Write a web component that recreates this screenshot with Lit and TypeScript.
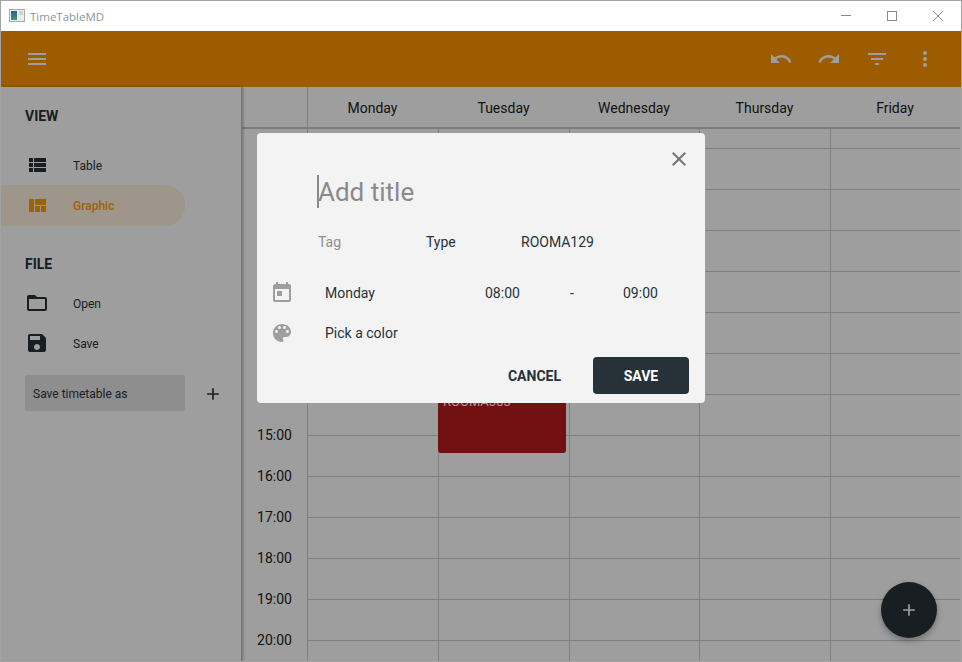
import { LitElement, html, css } from 'lit';
import { customElement } from 'lit/decorators.js';

const ICONS: Record<string, string> = {
  menu: 'M3 18h18v-2H3v2zm0-5h18v-2H3v2zm0-7v2h18V6H3z',
  undo: 'M12.5 8c-2.65 0-5.05.99-6.9 2.6L2 7v9h9l-3.62-3.62c1.39-1.16 3.16-1.88 5.12-1.88 3.54 0 6.55 2.31 7.6 5.5l2.37-.78C21.08 11.03 17.15 8 12.5 8z',
  redo: 'M18.4 10.6C16.55 8.99 14.15 8 11.5 8c-4.65 0-8.58 3.03-9.96 7.22L3.9 16c1.05-3.19 4.05-5.5 7.6-5.5 1.95 0 3.73.72 5.12 1.88L13 16h9V7l-3.6 3.6z',
  filter: 'M10 18h4v-2h-4v2zM3 6v2h18V6H3zm3 7h12v-2H6v2z',
  more: 'M12 8c1.1 0 2-.9 2-2s-.9-2-2-2-2 .9-2 2 .9 2 2 2zm0 2c-1.1 0-2 .9-2 2s.9 2 2 2 2-.9 2-2-.9-2-2-2zm0 6c-1.1 0-2 .9-2 2s.9 2 2 2 2-.9 2-2-.9-2-2-2z',
  table: 'M4 14h4v-4H4v4zm0 5h4v-4H4v4zM4 9h4V5H4v4zm5 5h12v-4H9v4zm0 5h12v-4H9v4zM9 5v4h12V5H9z',
  graphic: 'M10 18h5v-6h-5v6zm-6 0h5V5H4v13zm12 0h5v-6h-5v6zM10 5v6h11V5H10z',
  folder: 'M20 6h-8l-2-2H4c-1.1 0-1.99.9-1.99 2L2 18c0 1.1.9 2 2 2h16c1.1 0 2-.9 2-2V8c0-1.1-.9-2-2-2zm0 12H4V8h16v10z',
  save: 'M17 3H5c-1.11 0-2 .9-2 2v14c0 1.1.89 2 2 2h14c1.1 0 2-.9 2-2V7l-4-4zm-5 16c-1.66 0-3-1.34-3-3s1.34-3 3-3 3 1.34 3 3-1.34 3-3 3zm3-10H5V5h10v4z',
  add: 'M19 13h-6v6h-2v-6H5v-2h6V5h2v6h6v2z',
  close: 'M19 6.41L17.59 5 12 10.59 6.41 5 5 6.41 10.59 12 5 17.59 6.41 19 12 13.41 17.59 19 19 17.59 13.41 12z',
  today: 'M19 3h-1V1h-2v2H8V1H6v2H5c-1.11 0-1.99.9-1.99 2L3 19c0 1.1.89 2 2 2h14c1.1 0 2-.9 2-2V5c0-1.1-.9-2-2-2zm0 16H5V8h14v11zM7 10h5v5H7z',
  palette: 'M12 3c-4.97 0-9 4.03-9 9s4.03 9 9 9c.83 0 1.5-.67 1.5-1.5 0-.39-.15-.74-.39-1.01-.23-.26-.38-.61-.38-.99 0-.83.67-1.5 1.5-1.5H16c2.76 0 5-2.24 5-5 0-4.42-4.03-8-9-8zm-5.5 9c-.83 0-1.5-.67-1.5-1.5S5.67 9 6.5 9 8 9.67 8 10.5 7.33 12 6.5 12zm3-4C8.67 8 8 7.33 8 6.5S8.67 5 9.5 5s1.5.67 1.5 1.5S10.33 8 9.5 8zm5 0c-.83 0-1.5-.67-1.5-1.5S13.67 5 14.5 5s1.5.67 1.5 1.5S15.33 8 14.5 8zm3 4c-.83 0-1.5-.67-1.5-1.5S16.67 9 17.5 9s1.5.67 1.5 1.5-.67 1.5-1.5 1.5z',
};

const DAYS = ['Monday', 'Tuesday', 'Wednesday', 'Thursday', 'Friday'];
const HOURS = ['08:00', '09:00', '10:00', '11:00', '12:00', '13:00', '14:00', '15:00', '16:00', '17:00', '18:00', '19:00', '20:00'];

const icon = (name: string) => html`<svg class="icon" viewBox="0 0 24 24"><path d=${ICONS[name]}></path></svg>`;

@customElement('app-root')
export class AppRoot extends LitElement {
  static styles = css`
    :host {
      display: block;
      width: 962px;
      height: 662px;
      font-family: Roboto, 'Liberation Sans', sans-serif;
      color: #263238;
    }

    .window {
      box-sizing: border-box;
      width: 100%;
      height: 100%;
      display: flex;
      flex-direction: column;
      border: 1px solid #a3a3a3;
      background: #fff;
      overflow: hidden;
    }

    .icon {
      width: 24px;
      height: 24px;
      flex: none;
      fill: currentColor;
      display: block;
    }

    /* title bar */
    .titlebar {
      height: 30px;
      flex: none;
      display: flex;
      align-items: center;
      padding-left: 8px;
      gap: 5px;
      font-family: 'Open Sans', sans-serif;
      font-size: 11.5px;
      color: #8f939a;
    }

    .logo {
      width: 16px;
      height: 16px;
      flex: none;
    }

    .controls {
      margin-left: auto;
      display: flex;
    }

    .controls svg {
      width: 46px;
      height: 30px;
      display: block;
      fill: none;
      stroke: #8a8a8a;
      stroke-width: 1;
    }

    /* everything below the title bar sits under the scrim */
    .main {
      flex: 1;
      min-height: 0;
      position: relative;
      display: flex;
      flex-direction: column;
    }

    .toolbar {
      height: 56px;
      flex: none;
      display: flex;
      align-items: center;
      gap: 24px;
      padding: 0 24px;
      background: #ff9500;
      color: #fff;
    }

    .spacer {
      flex: 1;
    }

    .content {
      flex: 1;
      min-height: 0;
      display: flex;
      position: relative;
    }

    /* sidebar */
    .sidebar {
      width: 240px;
      flex: none;
      border-right: 1px solid #bdbdbd;
      box-shadow: 1px 0 3px rgba(0, 0, 0, 0.3);
      padding-top: 19px;
      background: #fff;
      position: relative;
    }

    .heading {
      height: 20px;
      line-height: 20px;
      padding-left: 24px;
      font-size: 14px;
      font-weight: 700;
    }

    .list {
      margin-top: 19px;
    }

    .list.file {
      margin-top: 9px;
    }

    .heading.file {
      margin-top: 28px;
    }

    .item {
      width: 160px;
      height: 40px;
      display: flex;
      align-items: center;
      gap: 24px;
      padding-left: 24px;
      border-radius: 0 20px 20px 0;
      font-size: 12px;
    }

    .item span {
      padding-top: 2px;
    }

    .item.active {
      height: 41px;
      background: rgba(255, 149, 0, 0.12);
      color: #ff9f0a;
      font-weight: 500;
    }

    .item.active span {
      padding-top: 0;
    }

    .save-as {
      display: flex;
      align-items: center;
      gap: 18px;
      margin: 12px 0 0 24px;
    }

    .save-as .icon {
      width: 20px;
      height: 20px;
      margin-top: 2px;
    }

    .field {
      box-sizing: border-box;
      width: 160px;
      height: 36px;
      display: flex;
      align-items: center;
      padding: 2px 0 0 8px;
      border-radius: 2px;
      background: #e6e6e6;
      font-size: 12px;
    }

    /* timetable */
    .table {
      flex: 1;
      min-width: 0;
      display: grid;
      grid-template-columns: 65px 131px 131px 130px 131px 130px;
      grid-template-rows: 42px 1fr;
      background: #fff;
      overflow: hidden;
    }

    .corner,
    .day-name {
      border-bottom: 2px solid #c8c8c8;
    }

    .corner {
      border-right: 1px solid #cdcdcd;
      margin-right: -1px;
    }

    .day-name {
      display: flex;
      align-items: center;
      justify-content: center;
      padding-top: 2px;
      font-size: 14px;
      color: #212121;
    }

    .hour {
      height: 41px;
      display: flex;
      align-items: center;
      justify-content: center;
      font-size: 14px;
      color: #212121;
    }

    .hour:first-child {
      height: 39px;
    }

    .day {
      border-left: 1px solid #cdcdcd;
      position: relative;
    }

    .cell {
      box-sizing: border-box;
      height: 41px;
      border-bottom: 1px solid #cdcdcd;
    }

    .cell:first-child {
      height: 20px;
    }

    .event {
      position: absolute;
      left: -1px;
      top: 224px;
      width: 128px;
      height: 100px;
      box-sizing: border-box;
      padding: 11px 5px;
      border-radius: 3px;
      background: #b71c1c;
      color: #fff;
      font-size: 13px;
      line-height: 15px;
    }

    .fab {
      position: absolute;
      right: 24px;
      bottom: 23px;
      width: 56px;
      height: 56px;
      border-radius: 50%;
      background: #263238;
      color: #fff;
      display: flex;
      align-items: center;
      justify-content: center;
      box-shadow: 0 3px 6px rgba(0, 0, 0, 0.3);
    }

    .fab .icon {
      width: 20px;
      height: 20px;
    }

    .scrim {
      position: absolute;
      inset: 0;
      background: rgba(0, 0, 0, 0.38);
    }

    /* dialog */
    .dialog {
      position: absolute;
      left: 256px;
      top: 102px;
      width: 448px;
      height: 270px;
      box-sizing: border-box;
      padding-top: 14px;
      border-radius: 4px;
      background: #f3f3f3;
      font-size: 14px;
    }

    .head {
      display: flex;
      justify-content: flex-end;
      padding-right: 14px;
      color: #757575;
    }

    .title {
      margin: 4px 0 0 60px;
      height: 33px;
      line-height: 35px;
      text-indent: -1px;
      border-left: 2px solid #8a8a8a;
      font-size: 26px;
      color: #8a8a8a;
    }

    .tags {
      margin: 24px 0 0 61px;
      display: grid;
      grid-template-columns: 108px 95px auto;
      line-height: 20px;
    }

    .tag {
      color: #8a9096;
    }

    .row {
      display: grid;
      grid-template-columns: 24px 191px 85px 53px auto;
      align-items: center;
      height: 24px;
      margin: 29px 0 0 13px;
    }

    .row + .row {
      margin-top: 16px;
    }

    .row .icon {
      color: #9e9e9e;
    }

    .row .label {
      padding-left: 31px;
      white-space: nowrap;
    }

    .actions {
      margin-top: 12px;
      padding-right: 16px;
      display: flex;
      justify-content: flex-end;
      align-items: center;
      gap: 32px;
      font-weight: 700;
    }

    .save {
      width: 96px;
      height: 37px;
      display: flex;
      align-items: center;
      justify-content: center;
      border-radius: 4px;
      background: #263238;
      color: #fff;
    }
  `;

  render() {
    return html`
      <div class="window">
        <div class="titlebar">
          <svg class="logo" viewBox="0 0 16 16">
            <defs>
              <linearGradient id="logo-fill" x1="0" y1="0" x2="0" y2="1">
                <stop offset="0" stop-color="#2f5f8f"></stop>
                <stop offset="1" stop-color="#3f9a78"></stop>
              </linearGradient>
            </defs>
            <rect x="0.5" y="1.5" width="15" height="12" fill="#ececec" stroke="#a9a9a9"></rect>
            <rect x="2" y="3" width="6" height="9" fill="url(#logo-fill)"></rect>
            <rect x="10" y="3" width="4" height="4" fill="#c4d8cc"></rect>
          </svg>
          TimeTableMD
          <div class="controls">
            <svg viewBox="0 0 46 30"><path d="M18 14.5h10"></path></svg>
            <svg viewBox="0 0 46 30"><rect x="18.5" y="10.5" width="9" height="9"></rect></svg>
            <svg viewBox="0 0 46 30"><path d="M18 10l10 10M28 10l-10 10"></path></svg>
          </div>
        </div>
        <div class="main">
          <div class="toolbar">
            ${icon('menu')}
            <div class="spacer"></div>
            ${icon('undo')} ${icon('redo')} ${icon('filter')} ${icon('more')}
          </div>
          <div class="content">
            <div class="sidebar">
              <div class="heading">VIEW</div>
              <div class="list">
                <div class="item">${icon('table')}<span>Table</span></div>
                <div class="item active">${icon('graphic')}<span>Graphic</span></div>
              </div>
              <div class="heading file">FILE</div>
              <div class="list file">
                <div class="item">${icon('folder')}<span>Open</span></div>
                <div class="item">${icon('save')}<span>Save</span></div>
              </div>
              <div class="save-as">
                <div class="field">Save timetable as</div>
                ${icon('add')}
              </div>
            </div>
            <div class="table">
              <div class="corner"></div>
              ${DAYS.map((d) => html`<div class="day-name">${d}</div>`)}
              <div class="hours">${HOURS.map((h) => html`<div class="hour">${h}</div>`)}</div>
              ${DAYS.map(
                (d) => html`<div class="day">
                  ${HOURS.map(() => html`<div class="cell"></div>`)}
                  ${d === 'Tuesday' ? html`<div class="event"><div>Lecture</div><div>Type</div><div>ROOMA303</div></div>` : ''}
                </div>`,
              )}
            </div>
            <div class="fab">${icon('add')}</div>
          </div>
          <div class="scrim"></div>
          <div class="dialog">
            <div class="head">${icon('close')}</div>
            <div class="title">Add title</div>
            <div class="tags">
              <span class="tag">Tag</span>
              <span>Type</span>
              <span>ROOMA129</span>
            </div>
            <div class="row">
              ${icon('today')}
              <span class="label">Monday</span>
              <span>08:00</span>
              <span>-</span>
              <span>09:00</span>
            </div>
            <div class="row">
              ${icon('palette')}
              <span class="label">Pick a color</span>
            </div>
            <div class="actions">
              <span>CANCEL</span>
              <div class="save">SAVE</div>
            </div>
          </div>
        </div>
      </div>
    `;
  }
}
